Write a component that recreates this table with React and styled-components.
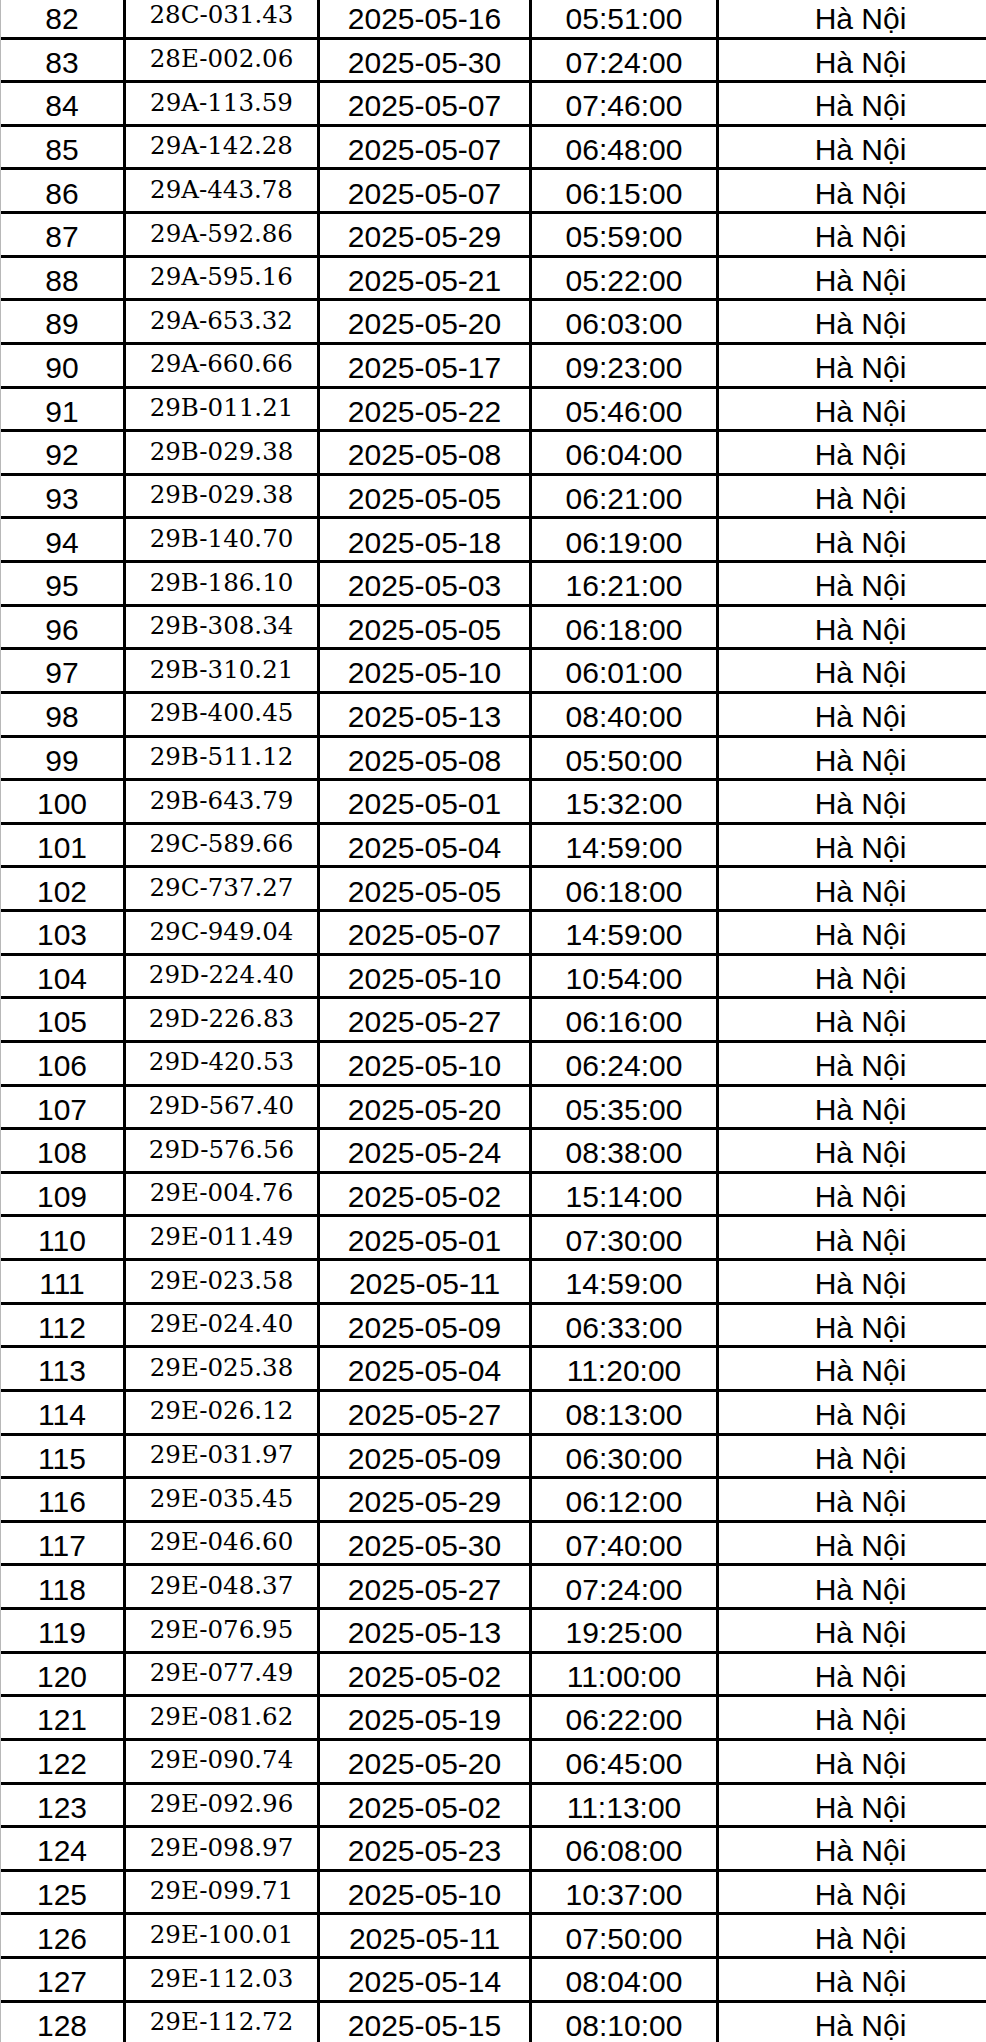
import React from 'react';
import styled, { createGlobalStyle } from 'styled-components';

const rows = [
    ['82', '28C-031.43', '2025-05-16', '05:51:00'],
    ['83', '28E-002.06', '2025-05-30', '07:24:00'],
    ['84', '29A-113.59', '2025-05-07', '07:46:00'],
    ['85', '29A-142.28', '2025-05-07', '06:48:00'],
    ['86', '29A-443.78', '2025-05-07', '06:15:00'],
    ['87', '29A-592.86', '2025-05-29', '05:59:00'],
    ['88', '29A-595.16', '2025-05-21', '05:22:00'],
    ['89', '29A-653.32', '2025-05-20', '06:03:00'],
    ['90', '29A-660.66', '2025-05-17', '09:23:00'],
    ['91', '29B-011.21', '2025-05-22', '05:46:00'],
    ['92', '29B-029.38', '2025-05-08', '06:04:00'],
    ['93', '29B-029.38', '2025-05-05', '06:21:00'],
    ['94', '29B-140.70', '2025-05-18', '06:19:00'],
    ['95', '29B-186.10', '2025-05-03', '16:21:00'],
    ['96', '29B-308.34', '2025-05-05', '06:18:00'],
    ['97', '29B-310.21', '2025-05-10', '06:01:00'],
    ['98', '29B-400.45', '2025-05-13', '08:40:00'],
    ['99', '29B-511.12', '2025-05-08', '05:50:00'],
    ['100', '29B-643.79', '2025-05-01', '15:32:00'],
    ['101', '29C-589.66', '2025-05-04', '14:59:00'],
    ['102', '29C-737.27', '2025-05-05', '06:18:00'],
    ['103', '29C-949.04', '2025-05-07', '14:59:00'],
    ['104', '29D-224.40', '2025-05-10', '10:54:00'],
    ['105', '29D-226.83', '2025-05-27', '06:16:00'],
    ['106', '29D-420.53', '2025-05-10', '06:24:00'],
    ['107', '29D-567.40', '2025-05-20', '05:35:00'],
    ['108', '29D-576.56', '2025-05-24', '08:38:00'],
    ['109', '29E-004.76', '2025-05-02', '15:14:00'],
    ['110', '29E-011.49', '2025-05-01', '07:30:00'],
    ['111', '29E-023.58', '2025-05-11', '14:59:00'],
    ['112', '29E-024.40', '2025-05-09', '06:33:00'],
    ['113', '29E-025.38', '2025-05-04', '11:20:00'],
    ['114', '29E-026.12', '2025-05-27', '08:13:00'],
    ['115', '29E-031.97', '2025-05-09', '06:30:00'],
    ['116', '29E-035.45', '2025-05-29', '06:12:00'],
    ['117', '29E-046.60', '2025-05-30', '07:40:00'],
    ['118', '29E-048.37', '2025-05-27', '07:24:00'],
    ['119', '29E-076.95', '2025-05-13', '19:25:00'],
    ['120', '29E-077.49', '2025-05-02', '11:00:00'],
    ['121', '29E-081.62', '2025-05-19', '06:22:00'],
    ['122', '29E-090.74', '2025-05-20', '06:45:00'],
    ['123', '29E-092.96', '2025-05-02', '11:13:00'],
    ['124', '29E-098.97', '2025-05-23', '06:08:00'],
    ['125', '29E-099.71', '2025-05-10', '10:37:00'],
    ['126', '29E-100.01', '2025-05-11', '07:50:00'],
    ['127', '29E-112.03', '2025-05-14', '08:04:00'],
    ['128', '29E-112.72', '2025-05-15', '08:10:00'],
];

const GlobalStyle = createGlobalStyle`
    html, body {
        margin: 0;
        padding: 0;
        background: #fff;
        overflow: hidden;
    }
`;

const Sheet = styled.div`
    display: grid;
    grid-template-columns: 125px 194px 212px 187px 286px;
    grid-auto-rows: 43.64px;
    width: max-content;
    margin-top: -4.1px;
    border-left: 1px solid #b8b8b8;
    color: #000;
`;

const Cell = styled.div`
    box-sizing: border-box;
    display: flex;
    justify-content: center;
    align-items: ${(p) => (p.$serif ? 'center' : 'flex-end')};
    border-right: 3px solid #000;
    border-bottom: 3px solid #000;
    font-family: ${(p) => (p.$serif ? '"DejaVu Serif", "Liberation Serif", serif' : '"Liberation Sans", Arial, sans-serif')};
    font-size: ${(p) => (p.$serif ? '24.5px' : '30px')};
    line-height: ${(p) => (p.$serif ? '1.164' : '1.15')};
    padding-bottom: ${(p) => (p.$serif ? '1px' : '0')};
    white-space: nowrap;
`;

const App = () => {
    return (
        <>
            <GlobalStyle />
            <Sheet>
                {rows.map(([no, plate, date, time]) => (
                    <React.Fragment key={no}>
                        <Cell>{no}</Cell>
                        <Cell $serif>{plate}</Cell>
                        <Cell>{date}</Cell>
                        <Cell>{time}</Cell>
                        <Cell>Hà Nội</Cell>
                    </React.Fragment>
                ))}
            </Sheet>
        </>
    );
};

export default App;
